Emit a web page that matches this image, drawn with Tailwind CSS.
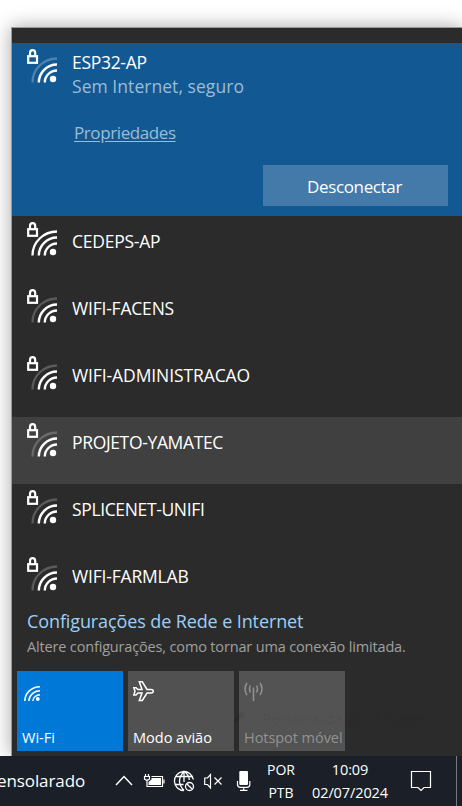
<!DOCTYPE html>
<html lang="pt-BR">
<head>
<meta charset="utf-8">
<title>Redes</title>
<script src="https://cdn.jsdelivr.net/npm/@tailwindcss/browser@4"></script>
</head>
<body class="w-[462px] h-[806px] overflow-hidden bg-white text-white font-['Open_Sans','Noto_Sans',sans-serif] text-[17.5px] leading-6 whitespace-nowrap">
<svg class="hidden">
  <symbol id="lock" viewBox="0 0 32 36">
    <path d="M3 7V4a2.600 2.900 0 0 1 5.200 0V7" fill="none" stroke="#fff" stroke-width="2.200"/>
    <rect x="1.200" y="7.200" width="8.800" height="6.600" fill="none" stroke="#fff" stroke-width="2.200"/>
  </symbol>
  <symbol id="arcs" viewBox="0 0 32 36">
    <path d="M11.800 33.500A18.200 18 0 0 1 30 15.500M17.800 33.500A12.200 12 0 0 1 30 21.500" fill="none" stroke="#fff" stroke-width="2.400"/>
    <circle cx="26" cy="30" r="3.200" fill="#fff"/>
  </symbol>
  <symbol id="outer" viewBox="0 0 32 36"><path d="M5.500 33.500A24.500 24 0 0 1 30 9.500" fill="none" stroke="#fff" stroke-width="2.300"/></symbol>
</svg>
<div class="h-full flex flex-col">
  <div class="h-[756px] pl-[11px] pt-[27px] overflow-hidden">
    <main class="h-[729px] border-t border-l border-[#999] bg-[#2b2b2b] shadow-[0_0_18px_rgba(0,0,0,0.35)] flex flex-col">
      <section class="mt-[15px] h-[173px] bg-[#125993] flex pl-[15px] shrink-0">
        <svg class="mt-1.5 w-8 h-9 shrink-0"><use href="#lock"/><use href="#arcs"/><use href="#outer" opacity=".25"/></svg>
        <div class="ml-[13px] flex-1 flex flex-col items-start pt-[7px]">
          <span class="tracking-[-0.3px]">ESP32-AP</span>
          <span class="text-[#9bbcd6] tracking-[0.05px]">Sem Internet, seguro</span>
          <a class="ml-0.5 mt-[23px] text-[#9bbcd6] text-[17px] tracking-[-0.4px] underline underline-offset-2">Propriedades</a>
          <button class="mt-5 ml-[191px] w-[185px] h-[41px] bg-[#437aa9] pt-0.5 pr-0.5 text-[17px] tracking-[-0.35px]">Desconectar</button>
        </div>
      </section>
      <ul class="h-[390px] shrink-0">
        <li class="h-[67px] flex pl-[15px]"><svg class="mt-1.5 w-8 h-9"><use href="#lock"/><use href="#arcs"/><use href="#outer"/></svg><span class="ml-[13px] mt-[13px] tracking-[-0.25px]">CEDEPS-AP</span></li>
        <li class="h-[67px] flex pl-[15px]"><svg class="mt-1.5 w-8 h-9"><use href="#lock"/><use href="#arcs"/><use href="#outer" opacity=".22"/></svg><span class="ml-[13px] mt-[13px] tracking-[-0.2px]">WIFI-FACENS</span></li>
        <li class="h-[67px] flex pl-[15px]"><svg class="mt-1.5 w-8 h-9"><use href="#lock"/><use href="#arcs"/><use href="#outer" opacity=".22"/></svg><span class="ml-[13px] mt-[13px] tracking-[-0.1px]">WIFI-ADMINISTRACAO</span></li>
        <li class="h-[67px] flex pl-[15px] bg-[#404040]"><svg class="mt-1.5 w-8 h-9"><use href="#lock"/><use href="#arcs"/><use href="#outer" opacity=".22"/></svg><span class="ml-[13px] mt-[13px] tracking-[-0.35px]">PROJETO-YAMATEC</span></li>
        <li class="h-[67px] flex pl-[15px]"><svg class="mt-1.5 w-8 h-9"><use href="#lock"/><use href="#arcs"/><use href="#outer" opacity=".22"/></svg><span class="ml-[13px] mt-[13px] tracking-[-0.36px]">SPLICENET-UNIFI</span></li>
        <li class="h-[55px] flex pl-[15px]"><svg class="mt-1.5 w-8 h-9"><use href="#lock"/><use href="#arcs"/><use href="#outer" opacity=".22"/></svg><span class="ml-[13px] mt-[13px] tracking-[-0.18px]">WIFI-FARMLAB</span></li>
      </ul>
      <div class="pl-[15px] pt-[3px] flex flex-col items-start">
        <span class="text-[#9cd0f8] text-[18px] tracking-[-0.11px]">Configurações de Rede e Internet</span>
        <span class="text-[#a0a0a0] text-[14.5px] mt-[2px] tracking-[-0.16px]">Altere configurações, como tornar uma conexão limitada.</span>
      </div>
      <div class="relative flex gap-[5px] pl-[5px] mt-3 text-[14.5px]">
        <div class="w-[106px] h-20 bg-[#0078d7] p-[5px] flex flex-col justify-between">
          <svg class="w-6 h-6 mt-2" viewBox="0 0 24 24" fill="none" stroke="#fff" stroke-width="1.500"><path d="M2.800 17A15.200 14.500 0 0 1 18 2.700M6.800 17A11 11 0 0 1 18 6.800M10.800 17A7.200 7 0 0 1 18 10.700"/><circle cx="15.800" cy="15" r="1.900" fill="#fff" stroke="none"/></svg>
          <span class="leading-4">Wi-Fi</span>
        </div>
        <div class="w-[106px] h-20 bg-[#515151] p-[5px] flex flex-col justify-between">
          <svg class="w-6 h-6 mt-[3px]" viewBox="0 0 24 24" fill="none" stroke="#fff" stroke-width="1.500"><path d="M.8 8.800H3L5 10.500H9L6.300 2.800H9.300L14 10.500H18Q20.300 10.800 20.300 12.300T18 14H14L9.300 21.500H6.300L9 14H5L3 16H.8L2 12.300Z"/></svg>
          <span class="leading-4">Modo avião</span>
        </div>
        <div class="w-[106px] h-20 bg-[#535353] p-[5px] flex flex-col justify-between text-[#929292]">
          <svg class="w-6 h-6 mt-[3px]" viewBox="0 0 24 24" fill="none" stroke="#929292" stroke-width="1.500"><path d="M9.500 8.500V22M6.500 6.500Q4.500 10 6.500 13.500M3 4Q-1 10 3 16M12.500 6.500Q14.500 10 12.500 13.500M16 4Q20 10 16 16"/></svg>
          <span class="leading-4 tracking-[-0.05px]">Hotspot móvel</span>
        </div>
        <svg class="absolute left-[220px] top-[37px] w-4 h-4" viewBox="0 0 16 16"><path d="M2 14V11L10 3L13 6L5 14Z" fill="#000" opacity=".07"/></svg>
        <span class="absolute left-[250px] top-[35px] text-[15px] text-black/6">Personalizar o Chrome</span>
      </div>
    </main>
  </div>
  <footer class="h-[50px] bg-[#1b2028] flex">
    <span class="mt-[13px] w-[115px] -ml-[3px] text-[17px] tracking-[-0.1px]">ensolarado</span>
    <svg class="w-[143px] h-[50px] shrink-0" viewBox="112 0 143 50" fill="none" stroke="#fff" stroke-width="1.300">
      <path d="M116 29L124 20.500L132 29" stroke-width="1.500"/>
      <path d="M145.500 18V20.500M148.500 18V20.500M144 20.500H150M144.500 20.500V23Q147 25.500 149.500 23V20.500M147 25V30.500H162.500V20.500H151.500M164 23.500V27.500" stroke-width="1.200"/>
      <path d="M151.500 22H161V29H148.500V26L151.500 23.500Z" fill="#fff" stroke="none"/>
      <path d="M193.300 23.500A9.500 9.500 0 1 0 184 34.500M184 34.500Q175 25 184 15.500Q189 18.500 189.300 24M184 15.500V26M175.500 20.500H192.500M175 28.500H183.500"/>
      <circle cx="189.500" cy="30.500" r="4"/><path d="M186.700 27.700L192.300 33.300"/>
      <path d="M204.700 22H207.500L210.500 18.500V32L207.500 28.500H204.700ZM214.500 21.500L221.500 28.500M221.500 21.500L214.500 28.500" stroke-width="1.200"/>
      <rect x="239.300" y="15" width="8.700" height="14" rx="1" fill="#fff" stroke="none"/>
      <path d="M237.500 25V28.500Q237.500 31.300 240.500 31.300H247Q249.800 31.300 249.800 28.500V25M243.700 31.300V34.300M240 34.300H247.500" stroke-width="1.200"/>
    </svg>
    <div class="w-[52px] pt-[3px] text-center text-[14px] leading-[22.5px]"><div>POR</div><div>PTB</div></div>
    <div class="w-[86px] pt-0.5 text-center text-[14.5px] leading-[23px] tracking-[-0.1px]"><div>10:09</div><div>02/07/2024</div></div>
    <svg class="ml-[16px] mt-[14px] w-6 h-6 shrink-0" viewBox="0 0 24 24" fill="none" stroke="#fff" stroke-width="1.200"><path d="M2.500 1.500H21.500V17.500H15L12 20.500L9 17.500H2.500Z"/></svg>
    <div class="ml-auto w-1.5 border-l border-[#777b80]"></div>
  </footer>
</div>
</body>
</html>
